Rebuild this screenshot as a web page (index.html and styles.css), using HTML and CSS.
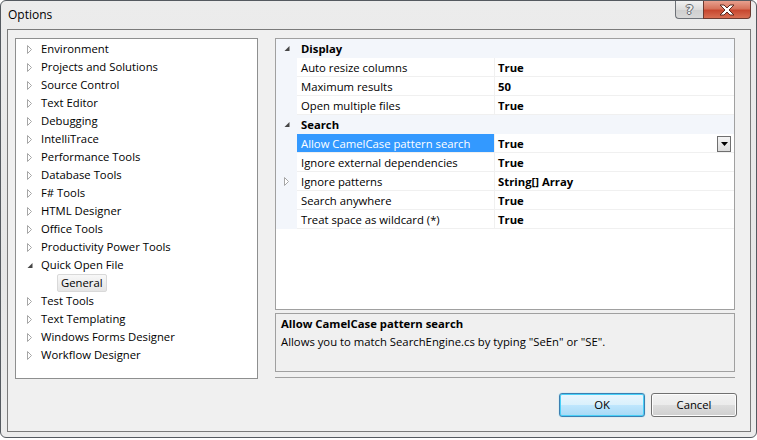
FILE: index.html
```html
<!DOCTYPE html>
<html>
<head>
<meta charset="utf-8">
<link rel="stylesheet" href="styles.css">
</head>
<body>
<div class="window">
  <div class="titlebar">
    <span class="title">Options</span>
    <div class="caption">
      <div class="cap-help">?</div>
      <div class="cap-close">
        <svg width="18" height="12" viewBox="0 0 18 12"><path d="M2 1 L6 1 L9 4 L12 1 L16 1 L11 6 L16 11 L12 11 L9 8 L6 11 L2 11 L7 6 Z" fill="#ffffff" stroke="#5a2a20" stroke-width="1" stroke-linejoin="round"/></svg>
      </div>
    </div>
  </div>
  <div class="client">
    <div class="main">
      <div class="tree">
        <div class="node"><span class="tw"><svg width="6" height="9"><polygon points="0.5,0.5 4.5,4.5 0.5,8.5" class="tri-c"/></svg></span><span>Environment</span></div>
        <div class="node"><span class="tw"><svg width="6" height="9"><polygon points="0.5,0.5 4.5,4.5 0.5,8.5" class="tri-c"/></svg></span><span>Projects and Solutions</span></div>
        <div class="node"><span class="tw"><svg width="6" height="9"><polygon points="0.5,0.5 4.5,4.5 0.5,8.5" class="tri-c"/></svg></span><span>Source Control</span></div>
        <div class="node"><span class="tw"><svg width="6" height="9"><polygon points="0.5,0.5 4.5,4.5 0.5,8.5" class="tri-c"/></svg></span><span>Text Editor</span></div>
        <div class="node"><span class="tw"><svg width="6" height="9"><polygon points="0.5,0.5 4.5,4.5 0.5,8.5" class="tri-c"/></svg></span><span>Debugging</span></div>
        <div class="node"><span class="tw"><svg width="6" height="9"><polygon points="0.5,0.5 4.5,4.5 0.5,8.5" class="tri-c"/></svg></span><span>IntelliTrace</span></div>
        <div class="node"><span class="tw"><svg width="6" height="9"><polygon points="0.5,0.5 4.5,4.5 0.5,8.5" class="tri-c"/></svg></span><span>Performance Tools</span></div>
        <div class="node"><span class="tw"><svg width="6" height="9"><polygon points="0.5,0.5 4.5,4.5 0.5,8.5" class="tri-c"/></svg></span><span>Database Tools</span></div>
        <div class="node"><span class="tw"><svg width="6" height="9"><polygon points="0.5,0.5 4.5,4.5 0.5,8.5" class="tri-c"/></svg></span><span>F# Tools</span></div>
        <div class="node"><span class="tw"><svg width="6" height="9"><polygon points="0.5,0.5 4.5,4.5 0.5,8.5" class="tri-c"/></svg></span><span>HTML Designer</span></div>
        <div class="node"><span class="tw"><svg width="6" height="9"><polygon points="0.5,0.5 4.5,4.5 0.5,8.5" class="tri-c"/></svg></span><span>Office Tools</span></div>
        <div class="node"><span class="tw"><svg width="6" height="9"><polygon points="0.5,0.5 4.5,4.5 0.5,8.5" class="tri-c"/></svg></span><span>Productivity Power Tools</span></div>
        <div class="node"><span class="tw"><svg width="6" height="9"><polygon points="5.5,2 5.5,7 0.5,7" class="tri-e"/></svg></span><span>Quick Open File</span></div>
        <div class="node child"><span class="sel">General</span></div>
        <div class="node"><span class="tw"><svg width="6" height="9"><polygon points="0.5,0.5 4.5,4.5 0.5,8.5" class="tri-c"/></svg></span><span>Test Tools</span></div>
        <div class="node"><span class="tw"><svg width="6" height="9"><polygon points="0.5,0.5 4.5,4.5 0.5,8.5" class="tri-c"/></svg></span><span>Text Templating</span></div>
        <div class="node"><span class="tw"><svg width="6" height="9"><polygon points="0.5,0.5 4.5,4.5 0.5,8.5" class="tri-c"/></svg></span><span>Windows Forms Designer</span></div>
        <div class="node"><span class="tw"><svg width="6" height="9"><polygon points="0.5,0.5 4.5,4.5 0.5,8.5" class="tri-c"/></svg></span><span>Workflow Designer</span></div>
      </div>
      <div class="right">
        <div class="grid">
          <div class="cat"><span class="margin"><svg width="6" height="9"><polygon points="5.5,2 5.5,7 0.5,7" class="tri-e"/></svg></span><span class="cat-label">Display</span></div>
          <div class="prop"><span class="margin"></span><span class="label">Auto resize columns</span><span class="value">True</span></div>
          <div class="prop"><span class="margin"></span><span class="label">Maximum results</span><span class="value">50</span></div>
          <div class="prop"><span class="margin"></span><span class="label">Open multiple files</span><span class="value">True</span></div>
          <div class="cat"><span class="margin"><svg width="6" height="9"><polygon points="5.5,2 5.5,7 0.5,7" class="tri-e"/></svg></span><span class="cat-label">Search</span></div>
          <div class="prop selected"><span class="margin"></span><span class="label">Allow CamelCase pattern search</span><span class="value">True<span class="dd"><svg width="7" height="4"><polygon points="0,0 7,0 3.5,4" fill="#000"/></svg></span></span></div>
          <div class="prop"><span class="margin"></span><span class="label">Ignore external dependencies</span><span class="value">True</span></div>
          <div class="prop"><span class="margin"><svg width="6" height="9"><polygon points="0.5,0.5 4.5,4.5 0.5,8.5" class="tri-c"/></svg></span><span class="label">Ignore patterns</span><span class="value">String[] Array</span></div>
          <div class="prop"><span class="margin"></span><span class="label">Search anywhere</span><span class="value">True</span></div>
          <div class="prop"><span class="margin"></span><span class="label">Treat space as wildcard (*)</span><span class="value">True</span></div>
        </div>
        <div class="desc">
          <div class="desc-title">Allow CamelCase pattern search</div>
          <div class="desc-text">Allows you to match SearchEngine.cs by typing "SeEn" or "SE".</div>
        </div>
        <div class="sep"></div>
      </div>
    </div>
    <div class="buttons">
      <div class="btn btn-default">OK</div>
      <div class="btn">Cancel</div>
    </div>
  </div>
</div>
</body>
</html>
```

FILE: styles.css
```css
* { box-sizing: border-box; }
html, body {
  margin: 0;
  padding: 0;
  background: #ffffff;
}
body {
  width: 757px;
  height: 440px;
  font-family: "Open Sans", "Noto Sans", sans-serif;
  font-size: 11.3px;
  color: #000;
}
.window {
  width: 757px;
  height: 438px;
  border: 1px solid #555a60;
  border-radius: 6px;
  background: linear-gradient(#ececec, #e6e6e6 60%, #ececec);
  padding: 0 5px 5px 6px;
  display: flex;
  flex-direction: column;
}
.titlebar {
  height: 28px;
  display: flex;
  align-items: flex-start;
  flex-shrink: 0;
}
.title {
  font-size: 12px;
  line-height: 16px;
  padding: 6px 0 0 1px;
  color: #000;
}
.caption {
  margin-left: auto;
  display: flex;
  height: 18px;
}
.cap-help {
  width: 28px;
  height: 18px;
  border: 1px solid #6d7177;
  border-top: none;
  border-right: none;
  border-radius: 0 0 0 4px;
  background: linear-gradient(#f1f1f1, #dcdcdc 50%, #cfcfcf 51%, #d8d8d8);
  color: #eeeeee;
  font-family: "DejaVu Sans", sans-serif;
  font-size: 13px;
  font-weight: bold;
  line-height: 17px;
  text-align: center;
  text-shadow: -1px 0 0 #5f636a, 1px 0 0 #5f636a, 0 -1px 0 #5f636a, 0 1px 0 #5f636a;
}
.cap-close {
  width: 48px;
  height: 18px;
  border: 1px solid #6d3a30;
  border-top: none;
  border-radius: 0 0 4px 0;
  background: linear-gradient(#e8a08e, #d6735c 45%, #c7472f 55%, #d86e52);
  display: flex;
  align-items: center;
  justify-content: center;
}
.client {
  flex: 1;
  border: 1px solid #7a7a7a;
  background: #f0f0f0;
  padding: 8px 15px 0 7px;
  display: flex;
  flex-direction: column;
}
.main {
  display: flex;
  gap: 17px;
  height: 341px;
}
.tree {
  width: 243px;
  height: 341px;
  border: 1px solid #8e8f8f;
  background: #fff;
  padding-top: 1px;
}
.node {
  height: 18px;
  display: flex;
  align-items: center;
  white-space: nowrap;
  line-height: 18px;
}
.tw {
  width: 25px;
  padding-left: 11px;
  display: flex;
  align-items: center;
}
.tri-c { fill: #fff; stroke: #a6a6a6; stroke-width: 1; }
.tri-e { fill: #464646; }
.child { padding-left: 41px; }
.sel {
  height: 18px;
  line-height: 16px;
  padding: 0 3px;
  border: 1px solid #d9d9d9;
  border-radius: 2px;
  background: linear-gradient(#f8f8f8, #e5e5e5);
}
.right {
  width: 460px;
  display: flex;
  flex-direction: column;
}
.grid {
  height: 272px;
  border: 1px solid #a0a0a0;
  background: #fff;
}
.cat, .prop {
  height: 19px;
  display: flex;
  align-items: stretch;
  white-space: nowrap;
  line-height: 18px;
}
.cat { background: #f3f6fb; }
.margin {
  width: 21px;
  flex-shrink: 0;
  background: #f3f6fb;
  display: flex;
  align-items: center;
  padding-left: 8px;
}
.cat-label {
  font-weight: bold;
  padding: 1px 0 0 4px;
}
.label {
  width: 198px;
  padding: 1px 0 0 4px;
  border-bottom: 1px solid #f0f0f0;
  border-right: 1px solid #f0f0f0;
}
.value {
  flex: 1;
  font-weight: bold;
  padding: 1px 0 0 3px;
  border-bottom: 1px solid #f0f0f0;
  display: flex;
  align-items: center;
}
.selected .label {
  background: #3399ff;
  color: #fff;
}
.dd {
  margin-left: auto;
  margin-right: 3px;
  width: 14px;
  height: 16px;
  border: 1px solid #6f6f6f;
  background: linear-gradient(#f4f4f4, #dcdcdc);
  display: flex;
  align-items: center;
  justify-content: center;
}
.desc {
  margin-top: 3px;
  height: 59px;
  border: 1px solid #a0a0a0;
  background: #f0f0f0;
  padding: 1px 5px;
  line-height: 18px;
}
.desc-title { font-weight: bold; }
.sep {
  margin-top: 5px;
  height: 1px;
  background: #a0a0a0;
}
.buttons {
  margin-top: 14px;
  display: flex;
  justify-content: flex-end;
  gap: 6px;
  margin-right: -2px;
}
.btn {
  width: 86px;
  height: 24px;
  border: 1px solid #707070;
  border-radius: 3px;
  background: linear-gradient(#f2f2f2, #ebebeb 50%, #dddddd 51%, #cfcfcf);
  text-align: center;
  line-height: 22px;
  box-shadow: inset 0 0 0 1px #fcfcfc;
}
.btn-default {
  border-color: #3c7fb1;
  background: linear-gradient(#eaf6fd, #d9f0fc 50%, #bee6fd 51%, #a7d9f5);
  box-shadow: inset 0 0 0 1px #48d0f8, 0 0 1px #48d0f8;
}
```
